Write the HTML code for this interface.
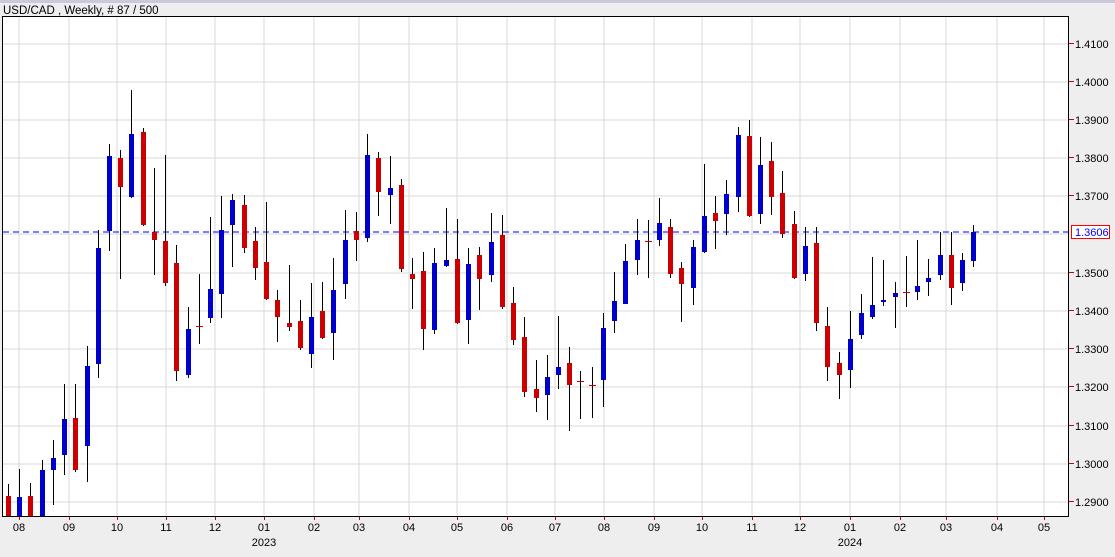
<!DOCTYPE html>
<html><head><meta charset="utf-8"><style>
html,body{margin:0;padding:0;background:#eeeeee;width:1115px;height:557px;overflow:hidden}
svg{display:block;font-family:"Liberation Sans",Arial,sans-serif}
</style></head><body>
<svg width="1115" height="557" viewBox="0 0 1115 557" shape-rendering="crispEdges">
<rect x="0" y="0" width="1115" height="557" fill="#eeeeee"/>
<rect x="0" y="0" width="1115" height="3" fill="#c9c9de"/>
<text x="3" y="14" font-size="11.5" fill="#000">USD/CAD , Weekly, # 87 / 500</text>
<rect x="2.5" y="16.5" width="1066" height="500" fill="#fff" stroke="#000" stroke-width="1"/>
<g stroke="#d9d9d9" stroke-width="1">
<line x1="3" x2="1068" y1="44" y2="44"/><line x1="3" x2="1068" y1="82" y2="82"/><line x1="3" x2="1068" y1="120" y2="120"/><line x1="3" x2="1068" y1="158" y2="158"/><line x1="3" x2="1068" y1="196" y2="196"/><line x1="3" x2="1068" y1="234" y2="234"/><line x1="3" x2="1068" y1="273" y2="273"/><line x1="3" x2="1068" y1="311" y2="311"/><line x1="3" x2="1068" y1="349" y2="349"/><line x1="3" x2="1068" y1="387" y2="387"/><line x1="3" x2="1068" y1="426" y2="426"/><line x1="3" x2="1068" y1="464" y2="464"/><line x1="3" x2="1068" y1="502" y2="502"/>
<line y1="17" y2="516" x1="19" x2="19"/><line y1="17" y2="516" x1="69" x2="69"/><line y1="17" y2="516" x1="117" x2="117"/><line y1="17" y2="516" x1="166" x2="166"/><line y1="17" y2="516" x1="215" x2="215"/><line y1="17" y2="516" x1="264" x2="264"/><line y1="17" y2="516" x1="314" x2="314"/><line y1="17" y2="516" x1="359" x2="359"/><line y1="17" y2="516" x1="409" x2="409"/><line y1="17" y2="516" x1="457" x2="457"/><line y1="17" y2="516" x1="507" x2="507"/><line y1="17" y2="516" x1="555" x2="555"/><line y1="17" y2="516" x1="604" x2="604"/><line y1="17" y2="516" x1="654" x2="654"/><line y1="17" y2="516" x1="702" x2="702"/><line y1="17" y2="516" x1="752" x2="752"/><line y1="17" y2="516" x1="800" x2="800"/><line y1="17" y2="516" x1="850" x2="850"/><line y1="17" y2="516" x1="900" x2="900"/><line y1="17" y2="516" x1="946" x2="946"/><line y1="17" y2="516" x1="997" x2="997"/><line y1="17" y2="516" x1="1044" x2="1044"/>
</g>
<line x1="3" x2="1068" y1="232" y2="232" stroke="#0000ff" stroke-width="1" stroke-dasharray="6,4"/>
<g id="c"></g>
<rect x="2" y="516" width="1067" height="1" fill="#000"/>
<g fill="#cc0000">
<rect x="1069" y="43" width="5" height="1"/><rect x="1069" y="81" width="5" height="1"/><rect x="1069" y="119" width="5" height="1"/><rect x="1069" y="157" width="5" height="1"/><rect x="1069" y="195" width="5" height="1"/><rect x="1069" y="272" width="5" height="1"/><rect x="1069" y="310" width="5" height="1"/><rect x="1069" y="348" width="5" height="1"/><rect x="1069" y="386" width="5" height="1"/><rect x="1069" y="425" width="5" height="1"/><rect x="1069" y="463" width="5" height="1"/><rect x="1069" y="501" width="5" height="1"/>
<rect x="19" y="517" width="1" height="3"/><rect x="69" y="517" width="1" height="3"/><rect x="117" y="517" width="1" height="3"/><rect x="166" y="517" width="1" height="3"/><rect x="215" y="517" width="1" height="3"/><rect x="264" y="517" width="1" height="3"/><rect x="314" y="517" width="1" height="3"/><rect x="359" y="517" width="1" height="3"/><rect x="409" y="517" width="1" height="3"/><rect x="457" y="517" width="1" height="3"/><rect x="507" y="517" width="1" height="3"/><rect x="555" y="517" width="1" height="3"/><rect x="604" y="517" width="1" height="3"/><rect x="654" y="517" width="1" height="3"/><rect x="702" y="517" width="1" height="3"/><rect x="752" y="517" width="1" height="3"/><rect x="800" y="517" width="1" height="3"/><rect x="850" y="517" width="1" height="3"/><rect x="900" y="517" width="1" height="3"/><rect x="946" y="517" width="1" height="3"/><rect x="997" y="517" width="1" height="3"/><rect x="1044" y="517" width="1" height="3"/>
</g>
<g font-size="11" fill="#000">
<text x="1075" y="48">1.4100</text><text x="1075" y="86">1.4000</text><text x="1075" y="124">1.3900</text><text x="1075" y="162">1.3800</text><text x="1075" y="200">1.3700</text><text x="1075" y="277">1.3500</text><text x="1075" y="315">1.3400</text><text x="1075" y="353">1.3300</text><text x="1075" y="391">1.3200</text><text x="1075" y="430">1.3100</text><text x="1075" y="468">1.3000</text><text x="1075" y="506">1.2900</text>
</g>
<rect x="1071.5" y="225.5" width="38" height="13" fill="#fff" stroke="#ff0000"/>
<text x="1075" y="236" font-size="11" fill="#0000ff">1.3606</text>
<g font-size="11" fill="#000" text-anchor="middle">
<text x="19" y="531">08</text><text x="69" y="531">09</text><text x="117" y="531">10</text><text x="166" y="531">11</text><text x="215" y="531">12</text><text x="264" y="531">01</text><text x="314" y="531">02</text><text x="359" y="531">03</text><text x="409" y="531">04</text><text x="457" y="531">05</text><text x="507" y="531">06</text><text x="555" y="531">07</text><text x="604" y="531">08</text><text x="654" y="531">09</text><text x="702" y="531">10</text><text x="752" y="531">11</text><text x="800" y="531">12</text><text x="850" y="531">01</text><text x="900" y="531">02</text><text x="946" y="531">03</text><text x="997" y="531">04</text><text x="1044" y="531">05</text>
<text x="264" y="546">2023</text><text x="850" y="546">2024</text>
</g>
</svg>
<script>
var d=[[8,484,496,516,516,'r'],[19,469,497,516,516,'b'],[30,483,496,516,516,'r'],[42,460,470,516,516,'b'],[53,440,458,470,505,'b'],[64,384,419,455,475,'b'],[75,384,418,470,472,'r'],[87,346,366,446,482,'b'],[98,230,248,364,378,'b'],[109,144,156,231,251,'b'],[120,150,158,187,279,'r'],[131,90,134,197,198,'b'],[143,128,132,225,226,'r'],[154,168,232,240,275,'r'],[165,155,241,283,286,'r'],[176,245,263,371,381,'r'],[188,307,329,375,378,'b'],[199,274,326,327,344,'d'],[210,217,289,318,323,'b'],[221,196,230,294,318,'b'],[232,194,200,225,267,'b'],[244,195,205,248,253,'r'],[255,227,241,268,280,'r'],[266,202,262,299,300,'r'],[277,290,300,317,342,'r'],[289,265,323,327,331,'r'],[300,300,321,348,350,'r'],[311,283,317,354,368,'b'],[322,282,311,338,339,'r'],[333,258,290,333,360,'b'],[345,210,240,284,299,'b'],[356,212,231,240,261,'r'],[367,134,155,238,242,'b'],[378,152,158,192,216,'r'],[390,156,188,195,224,'b'],[401,179,185,269,272,'r'],[412,258,274,279,309,'r'],[423,252,271,329,350,'r'],[434,248,263,330,334,'b'],[446,208,260,266,267,'b'],[457,219,259,323,324,'r'],[468,248,264,320,344,'b'],[479,247,255,279,310,'r'],[491,213,242,275,282,'b'],[502,215,235,307,309,'r'],[513,287,303,340,345,'r'],[524,317,337,392,397,'r'],[536,360,389,398,412,'r'],[547,355,377,395,420,'b'],[558,316,367,375,389,'b'],[569,347,363,385,431,'r'],[580,371,381,381,419,'d'],[592,367,385,385,418,'d'],[603,313,328,380,407,'b'],[614,272,301,321,333,'b'],[625,244,261,304,304,'b'],[637,219,240,260,275,'b'],[648,220,241,241,278,'d'],[659,198,223,240,246,'b'],[670,219,227,274,278,'r'],[681,262,268,284,322,'r'],[693,240,247,288,305,'b'],[704,164,216,252,253,'b'],[715,196,213,221,249,'r'],[726,180,194,214,235,'b'],[738,127,135,197,212,'b'],[749,120,136,216,217,'r'],[760,137,165,214,224,'b'],[771,142,161,197,215,'r'],[782,171,193,234,238,'r'],[794,211,224,278,279,'r'],[805,227,246,274,281,'b'],[816,227,243,323,331,'r'],[827,307,326,367,381,'r'],[839,352,363,375,399,'r'],[850,311,339,370,388,'b'],[861,294,313,335,339,'b'],[872,257,305,317,319,'b'],[883,260,300,302,306,'b'],[895,282,293,297,328,'b'],[906,256,292,292,307,'d'],[917,240,286,292,300,'b'],[928,259,278,282,296,'b'],[940,232,255,275,280,'b'],[951,232,255,288,305,'r'],[962,253,260,283,291,'b'],[973,225,232,261,267,'b']];
var g=document.getElementById('c'),s='';
d.forEach(function(c){var x=c[0];s+='<rect x="'+x+'" y="'+c[1]+'" width="1" height="'+(c[4]-c[1])+'" fill="#000"/>';
if(c[5]=='d'){s+='<rect x="'+(x-3)+'" y="'+c[2]+'" width="7" height="1" fill="#cc0000"/>';}
else{var h=Math.max(c[3]-c[2],2);s+='<rect x="'+(x-2)+'" y="'+c[2]+'" width="5" height="'+h+'" fill="'+(c[5]=='r'?'#cc0000':'#0000cc')+'"/>';}});
g.innerHTML=s;
</script>
</body></html>
